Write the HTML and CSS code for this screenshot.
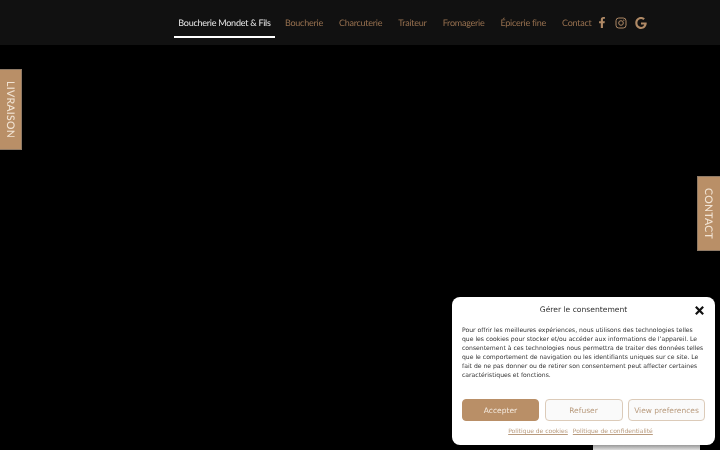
FILE: index.html
```html
<!DOCTYPE html>
<html lang="fr">
<head>
<meta charset="utf-8">
<title>Boucherie Mondet &amp; Fils</title>
<link rel="stylesheet" href="styles.css">
</head>
<body>
<header class="topbar">
  <nav class="nav">
    <a class="nav-link active" href="#">Boucherie Mondet &amp; Fils</a>
    <a class="nav-link" href="#">Boucherie</a>
    <a class="nav-link" href="#">Charcuterie</a>
    <a class="nav-link" href="#">Traiteur</a>
    <a class="nav-link" href="#">Fromagerie</a>
    <a class="nav-link" href="#">Épicerie fine</a>
    <a class="nav-link" href="#">Contact</a>
  </nav>
  <div class="socials">
    <svg class="icon-f" viewBox="0 0 320 512" aria-hidden="true"><path d="M279 288l14-93h-89v-60c0-25 12-50 52-50h41V6s-37-6-72-6C152 0 105 44 105 124v71H23v93h82v224h99V288z"/></svg>
    <svg class="icon-ig" viewBox="0 0 24 24" aria-hidden="true"><rect x="2" y="2" width="20" height="20" rx="5.5" fill="none" stroke-width="2"/><circle cx="12" cy="12" r="4.6" fill="none" stroke-width="2"/><circle class="dot" cx="17.6" cy="6.4" r="1.3"/></svg>
    <svg class="icon-g" viewBox="0 0 488 512" aria-hidden="true"><path d="M488 261c0 141-97 251-244 251C109 512 0 403 0 256S109 0 244 0c66 0 121 24 164 64l-66 64C254 43 89 107 89 256c0 92 74 167 155 167 94 0 130-68 135-103H244v-85h240c2 12 4 24 4 26z"/></svg>
  </div>
</header>
<a class="tab tab-left" href="#">LIVRAISON</a>
<a class="tab tab-right" href="#">CONTACT</a>
<div class="peek"></div>
<section class="consent">
  <div class="consent-head">
    <h2 class="consent-title">Gérer le consentement</h2>
    <svg class="consent-close" viewBox="0 0 12 12" aria-hidden="true"><path d="M2 2l8 8M10 2l-8 8"/></svg>
  </div>
  <p class="consent-text">Pour offrir les meilleures expériences, nous utilisons des technologies telles que les cookies pour stocker et/ou accéder aux informations de l’appareil. Le consentement à ces technologies nous permettra de traiter des données telles que le comportement de navigation ou les identifiants uniques sur ce site. Le fait de ne pas donner ou de retirer son consentement peut affecter certaines caractéristiques et fonctions.</p>
  <div class="consent-buttons">
    <button class="btn btn-primary">Accepter</button>
    <button class="btn">Refuser</button>
    <button class="btn">View preferences</button>
  </div>
  <div class="consent-links">
    <a href="#">Politique de cookies</a>
    <a href="#">Politique de confidentialité</a>
  </div>
</section>
</body>
</html>
```
FILE: styles.css
```css
* { box-sizing: border-box; }
html, body { margin: 0; height: 100%; }
body {
  background: #000;
  overflow: hidden;
  font-family: "Lato", "Liberation Sans", sans-serif;
  text-rendering: geometricPrecision;
}
.topbar {
  height: 45px;
  background: #111;
  display: flex;
  align-items: flex-start;
  padding-left: 174px;
  will-change: transform;
}
.nav { display: flex; }
.nav-link {
  height: 38px;
  line-height: 45px;
  font-size: 9px;
  letter-spacing: -0.25px;
  padding: 0 5px;
  margin-right: 6px;
  color: #96704f;
  text-decoration: none;
  white-space: nowrap;
}
.nav-link.active {
  color: #e8e8e8;
  border-bottom: 2px solid #fff;
  width: 101px;
  text-align: center;
  padding: 0;
  margin-right: 5px;
}
.socials { display: flex; align-items: center; height: 45px; margin-left: -5px; }
.socials svg { fill: #b08a66; stroke: #b08a66; display: block; }
.icon-f { width: 8px; height: 11px; stroke: none !important; margin-right: 9px; }
.icon-ig { width: 12px; height: 12px; }
.icon-ig .dot { stroke: none; }
.icon-g { width: 12px; height: 12px; margin-left: 8px; stroke: none !important; }
.tab {
  position: fixed;
  background: #b98f67;
  color: #f1e3d3;
  text-decoration: none;
  writing-mode: vertical-rl;
  display: flex;
  align-items: center;
  justify-content: center;
  font-size: 10.5px;
  font-weight: 500;
  letter-spacing: 0.3px;
  border: 1px solid #8f7a66;
  padding-right: 2px;
  will-change: transform;
}
.tab-left { left: 0; top: 69px; width: 22px; height: 81px; border-left: 0; }
.tab-right { right: 0; top: 176px; width: 23px; height: 75px; border-right: 0; }
.peek {
  position: fixed;
  left: 593px;
  top: 445px;
  width: 107px;
  height: 5px;
  background: linear-gradient(#999, #ddd);
}
.consent {
  position: fixed;
  left: 452px;
  top: 297px;
  width: 263px;
  height: 148px;
  background: #fff;
  border-radius: 8px;
  padding: 0 10px;
  font-family: "DejaVu Sans", sans-serif;
  color: #222;
  will-change: transform;
}
.consent-head { height: 25px; display: flex; align-items: center; justify-content: center; position: relative; }
.consent-title { margin: 0; font-size: 7.6px; font-weight: 400; color: #333; }
.consent-close {
  position: absolute;
  right: 0;
  top: 8px;
  width: 11px;
  height: 11px;
  stroke: #111;
  stroke-width: 2.4;
  fill: none;
}
.consent-text { margin: 4px 0 0; font-size: 6.1px; line-height: 9px; color: #333; height: 68px; }
.consent-buttons { display: grid; grid-template-columns: 77px 78px 77px; gap: 5.5px; margin-top: 5px; }
.btn {
  height: 22px;
  padding: 0;
  border: 1px solid #dccbb9;
  border-radius: 4px;
  background: #fafafa;
  color: #b89a7d;
  font-family: "DejaVu Sans", sans-serif;
  font-size: 7.5px;
  white-space: nowrap;
  text-rendering: geometricPrecision;
}
.btn-primary { background: #b98f67; border-color: #b98f67; color: #f5ebe0; }
.consent-links { display: flex; justify-content: center; gap: 5px; margin-top: 7px; padding-right: 6px; font-size: 6px; }
.consent-links a { color: #b89a7d; }
```
